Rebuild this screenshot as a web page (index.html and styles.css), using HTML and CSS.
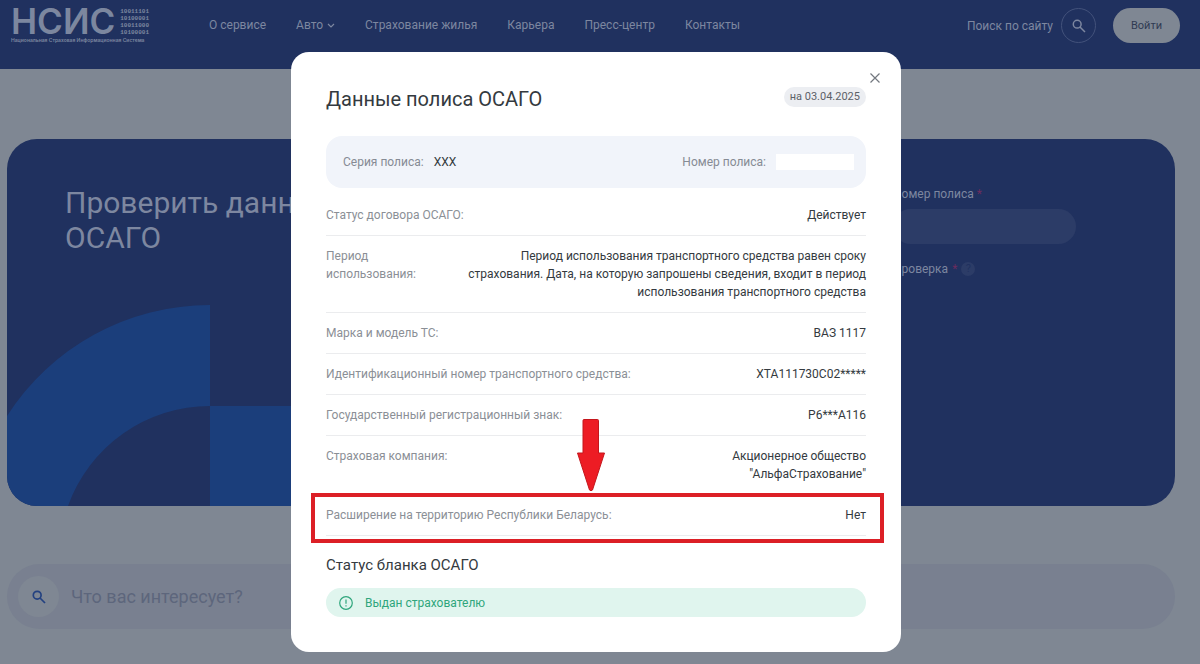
FILE: index.html
```
<!DOCTYPE html>
<html lang="ru">
<head>
    <meta charset="UTF-8">
    <meta name="viewport" content="width=device-width, initial-scale=1.0">
    <title>НСИС - Данные полиса ОСАГО</title>
    <link rel="stylesheet" href="styles.css">
</head>
<body>

    <header class="header">
        <a href="#" class="logo">
            <span class="logo-top">
                <span class="logo-name">НСИС</span>
                <span class="logo-code">10011101<br>10100001<br>10011000<br>10100001</span>
            </span>
            <span class="logo-text">Национальная Страховая Информационная Система</span>
        </a>
        <nav class="menu">
            <a href="#">О сервисе</a>
            <a href="#">Авто
                <svg width="8" height="6" viewBox="0 0 8 6" fill="none" stroke="currentColor" stroke-width="1.2"><path d="M1 1l3 3 3-3"/></svg>
            </a>
            <a href="#">Страхование жилья</a>
            <a href="#">Карьера</a>
            <a href="#">Пресс-центр</a>
            <a href="#">Контакты</a>
        </nav>
        <div class="header-right">
            <label for="siteSearch">Поиск по сайту</label>
            <button id="siteSearch" class="round-btn" type="button">
                <svg width="14" height="14" viewBox="0 0 14 14" fill="none" stroke="currentColor" stroke-width="1.5"><circle cx="5.2" cy="5.2" r="3.9"/><path d="M8 8l5 5"/></svg>
            </button>
            <button class="login-btn" type="button">Войти</button>
        </div>
    </header>

    <main class="page">
        <section class="hero">
            <svg class="hero-art" width="304" height="201" viewBox="0 0 304 201">
                <path d="M203 0A241 241 0 0 0 0 111V201H61A151 151 0 0 1 203 101Z" fill="#1b3e7b"/>
                <path d="M203 101H304V201H203Z" fill="#1b3e7b"/>
            </svg>
            <h1 class="hero-title">Проверить данные полиса ОСАГО</h1>
            <form class="hero-form">
                <label for="policyNumber">Номер полиса <span class="req">*</span></label>
                <input id="policyNumber" class="hero-input" type="text">
                <p class="check">Проверка <span class="req">*</span> <span class="help">?</span></p>
            </form>
        </section>

        <form class="search">
            <button class="search-btn" type="button" aria-label="Найти">
                <svg width="14" height="14" viewBox="0 0 14 14" fill="none" stroke="currentColor" stroke-width="1.7"><circle cx="5.2" cy="5.2" r="3.9"/><path d="M8 8l5 5"/></svg>
            </button>
            <input class="search-input" type="text" placeholder="Что вас интересует?" aria-label="Что вас интересует?">
        </form>
    </main>

    <div class="overlay">
        <div class="modal" role="dialog" aria-labelledby="modalTitle">
            <button class="close" type="button" aria-label="Закрыть">
                <svg width="10" height="10" viewBox="0 0 10 10" stroke="currentColor" stroke-width="1.2"><path d="M0.5 0.5l9 9M9.5 0.5l-9 9"/></svg>
            </button>

            <div class="modal-head">
                <h2 id="modalTitle">Данные полиса ОСАГО</h2>
                <span class="date">на 03.04.2025</span>
            </div>

            <div class="policy">
                <div class="policy-item">Серия полиса: <b>ХХХ</b></div>
                <div class="policy-item">Номер полиса: <span class="hidden-number"></span></div>
            </div>

            <dl class="rows">
                <div class="row">
                    <dt>Статус договора ОСАГО:</dt>
                    <dd>Действует</dd>
                </div>
                <div class="row">
                    <dt>Период использования:</dt>
                    <dd>Период использования транспортного средства равен сроку страхования. Дата, на которую запрошены сведения, входит в период использования транспортного средства</dd>
                </div>
                <div class="row">
                    <dt>Марка и модель ТС:</dt>
                    <dd>ВАЗ 1117</dd>
                </div>
                <div class="row">
                    <dt>Идентификационный номер транспортного средства:</dt>
                    <dd>XTA111730C02*****</dd>
                </div>
                <div class="row">
                    <dt>Государственный регистрационный знак:</dt>
                    <dd>Р6***А116</dd>
                </div>
                <div class="row no-line">
                    <dt>Страховая компания:</dt>
                    <dd>Акционерное общество<br>"АльфаСтрахование"</dd>
                </div>
                <div class="row marked">
                    <dt>Расширение на территорию Республики Беларусь:</dt>
                    <dd>Нет
                        <svg class="arrow" width="28" height="72" viewBox="0 0 28 72"><path d="M6 1.5Q6 0.5 7 0.5H20.5Q21.5 0.5 21.5 1.5V34H27.5L15.5 71Q14 72.5 12.5 71L0.5 34H6Z" fill="#ed1c24" stroke="#c4161c"/></svg>
                    </dd>
                </div>
            </dl>

            <h3 class="blank-title">Статус бланка ОСАГО</h3>
            <div class="status">
                <svg width="14" height="14" viewBox="0 0 14 14" fill="none" stroke="currentColor" stroke-width="1.2"><circle cx="7" cy="7" r="6.3"/><path d="M7 3.4v4.4M7 9.2v1.4"/></svg>
                Выдан страхователю
            </div>
        </div>
    </div>

</body>
</html>
```
FILE: styles.css
```
* {
    box-sizing: border-box;
}

body {
    margin: 0;
    min-height: 100vh;
    overflow: hidden;
    background: #7f8793;
    color: #7d87a0;
    font-family: Roboto, "Noto Sans", sans-serif;
    font-size: 12px;
}

a {
    color: inherit;
    text-decoration: none;
}

button,
input {
    font: inherit;
    color: inherit;
    border: none;
    padding: 0;
}

svg {
    flex-shrink: 0;
}

/* header */
.header {
    display: flex;
    align-items: flex-start;
    height: 69px;
    padding: 8px 20px 0 11px;
    background: #20315f;
}

.logo {
    display: flex;
    flex-direction: column;
    width: 138px;
    margin-right: 60px;
    color: #7c879f;
    font-family: Inter, sans-serif;
}

.logo-top {
    display: flex;
    align-items: center;
    justify-content: space-between;
    height: 27px;
}

.logo-name {
    font-size: 35px;
    font-weight: 600;
    line-height: 27px;
}

.logo-code {
    font-family: "Liberation Mono", monospace;
    font-size: 6px;
    font-weight: 700;
    line-height: 7px;
}

.logo-text {
    margin-top: 2px;
    font-size: 5px;
    font-weight: 600;
    line-height: 7px;
    white-space: nowrap;
}

.menu {
    display: flex;
    gap: 30px;
    line-height: 35px;
    white-space: nowrap;
}

.menu a {
    display: flex;
    align-items: center;
    gap: 4px;
}

.header-right {
    display: flex;
    align-items: center;
    gap: 8px;
    margin-left: auto;
    white-space: nowrap;
}

.round-btn {
    display: flex;
    align-items: center;
    justify-content: center;
    width: 35px;
    height: 35px;
    border: 1px solid #43527b;
    border-radius: 50%;
    background: none;
}

.login-btn {
    width: 67px;
    height: 35px;
    margin-left: 9px;
    border-radius: 18px;
    background: #7f8793;
    color: #2f3a52;
    font-size: 11px;
}

/* page under the modal */
.page {
    padding: 70px 25px 0 7px;
}

.hero {
    position: relative;
    display: flex;
    justify-content: space-between;
    height: 367px;
    padding: 46px 99px 0 58px;
    border-radius: 30px;
    background: #20315f;
    overflow: hidden;
}

.hero-art {
    position: absolute;
    left: 0;
    bottom: 0;
}

.hero-title {
    max-width: 380px;
    margin: 0;
    font-size: 30px;
    font-weight: 400;
    line-height: 35px;
}

.hero-form {
    width: 183px;
    line-height: 18px;
}

.req {
    color: #6b2c5e;
}

.hero-input {
    width: 100%;
    height: 35px;
    margin: 6px 0 16px;
    border-radius: 18px;
    background: #2c3c67;
}

.check {
    display: flex;
    align-items: center;
    gap: 4px;
    margin: 0;
}

.help {
    width: 14px;
    height: 14px;
    border-radius: 50%;
    background: #2c3c67;
    color: #20315f;
    font-size: 11px;
    line-height: 14px;
    text-align: center;
}

.search {
    display: flex;
    align-items: center;
    gap: 12px;
    height: 65px;
    margin-top: 58px;
    padding: 0 11px;
    border-radius: 33px;
    background: #798090;
}

.search-btn {
    display: flex;
    align-items: center;
    justify-content: center;
    width: 41px;
    height: 41px;
    border-radius: 50%;
    background: #7f8793;
    color: #234180;
}

.search-input {
    flex: 1;
    background: none;
    font-size: 18px;
}

.search-input::placeholder {
    color: #5d667c;
}

/* modal */
.overlay {
    position: fixed;
    inset: 0;
    display: flex;
    align-items: flex-start;
    justify-content: center;
    padding: 52px 8px 0 0;
}

.modal {
    position: relative;
    width: 610px;
    max-width: 100%;
    padding: 32px 35px 35px;
    border-radius: 18px;
    background: #fff;
    color: #343a40;
}

.close {
    position: absolute;
    top: 16px;
    right: 16px;
    display: flex;
    align-items: center;
    justify-content: center;
    width: 20px;
    height: 20px;
    background: none;
    color: #73787f;
}

.modal-head {
    display: flex;
    align-items: flex-start;
    justify-content: space-between;
    margin-bottom: 22px;
}

.modal-head h2 {
    margin: 0;
    font-size: 20px;
    font-weight: 400;
    line-height: 30px;
}

.date {
    margin-top: 3px;
    padding: 0 6px;
    border-radius: 10px;
    background: #eceef2;
    color: #5c6168;
    font-size: 11px;
    line-height: 20px;
}

.policy {
    display: flex;
    align-items: center;
    justify-content: space-between;
    height: 52px;
    padding: 0 12px 0 17px;
    border-radius: 16px;
    background: #f1f4fa;
    color: #868b94;
}

.policy-item {
    display: flex;
    align-items: center;
    gap: 10px;
}

.policy b {
    color: #343a40;
    font-weight: 400;
}

.hidden-number {
    width: 78px;
    height: 16px;
    background: #fff;
}

.rows {
    margin: 7px 0 0;
}

.row {
    position: relative;
    display: flex;
    justify-content: space-between;
    gap: 40px;
    padding: 11px 0;
    border-bottom: 1px solid #ebecee;
    line-height: 18px;
}

.row dt {
    color: #8b8f96;
}

.row dd {
    max-width: 408px;
    margin: 0;
    text-align: right;
}

.no-line {
    border-color: transparent;
}

/* red frame around the row */
.marked::after {
    content: "";
    position: absolute;
    inset: -2px -18px -8px -15px;
    border: 4px solid #dc1f26;
}

.arrow {
    position: absolute;
    left: 251px;
    bottom: 44px;
}

.blank-title {
    margin: 18px 0 12px;
    font-size: 15px;
    font-weight: 400;
    line-height: 22px;
}

.status {
    display: flex;
    align-items: center;
    gap: 12px;
    height: 29px;
    padding: 0 13px;
    border-radius: 15px;
    background: #e0f5ee;
    color: #2fa67c;
}
```
